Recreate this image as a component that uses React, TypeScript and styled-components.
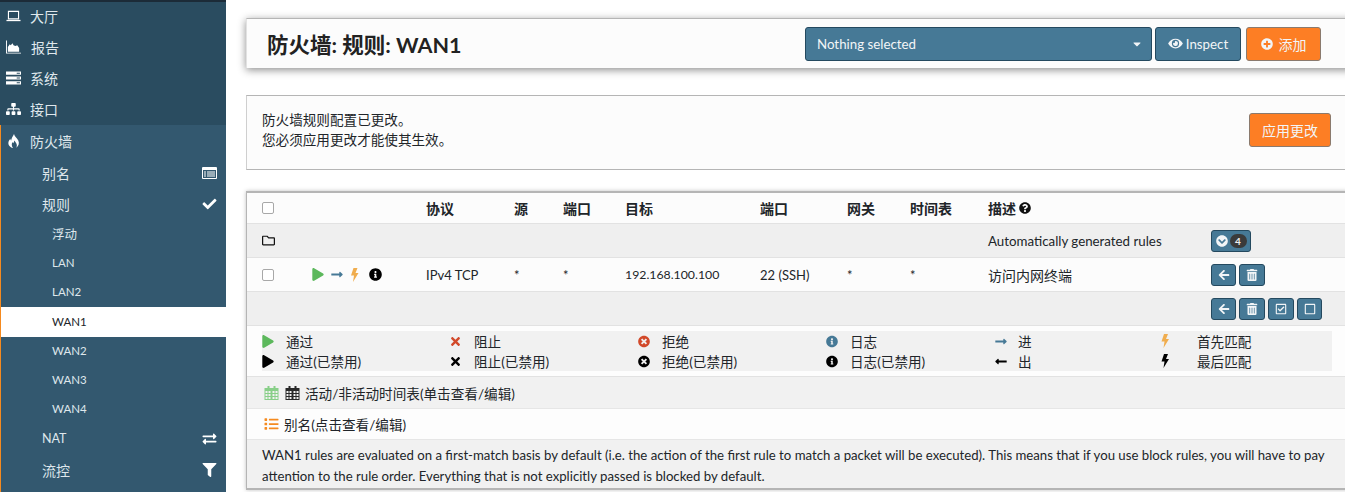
import styled, { createGlobalStyle } from "styled-components";
import type { ReactNode } from "react";
import {
  FaArrowLeft,
  FaCaretDown,
  FaCheck,
  FaChevronCircleDown,
  FaExchangeAlt,
  FaEye,
  FaFilter,
  FaInfoCircle,
  FaList,
  FaLongArrowAltLeft,
  FaLongArrowAltRight,
  FaPlay,
  FaPlusCircle,
  FaQuestionCircle,
  FaRegCheckSquare,
  FaRegFolder,
  FaRegSquare,
  FaSitemap,
  FaTimes,
  FaTimesCircle,
  FaTrashAlt,
} from "react-icons/fa";

const GlobalStyle = createGlobalStyle`
  html, body {
    margin: 0;
    padding: 0;
    height: 100%;
    overflow: hidden;
    background: #fff;
  }
  body {
    font-family: "Lato", "Noto Sans CJK SC", sans-serif;
    font-size: 14px;
    color: #212529;
  }
`;

const Page = styled.div`
  display: flex;
  height: 492px;
  overflow: hidden;
`;

const Sidebar = styled.nav`
  flex: 0 0 226px;
  background: #2a4c60;
  border-top: 2px solid #1c2b38;
  box-sizing: border-box;
  display: flex;
  flex-direction: column;
`;

const TopItems = styled.div`
  display: flex;
  flex-direction: column;
  height: 123px;
`;

const Section = styled.div`
  flex: 1;
  background: #33586f;
  border-left: 1px solid #f58a1f;
  display: flex;
  flex-direction: column;
`;

const NavRow = styled.div<{ $first?: boolean; $gap?: number }>`
  height: 31px;
  display: flex;
  align-items: center;
  padding-left: 6px;
  color: #dfe7ec;
  font-size: 14px;
  margin-top: ${(p) => (p.$first ? "-2px" : "0")};
  svg {
    width: 15px;
    height: 14px;
    color: #fff;
    margin-right: ${(p) => p.$gap ?? 9}px;
    flex: none;
  }
`;

const SectionHead = styled(NavRow)`
  padding: 0 0 2px 5px;
`;

const SubRow = styled.div<{ $latin?: boolean }>`
  height: 31px;
  box-sizing: border-box;
  display: flex;
  align-items: center;
  justify-content: space-between;
  padding: 0 9px 2px 41px;
  color: #dfe7ec;
  font-size: ${(p) => (p.$latin ? "12.5px" : "14px")};
  svg {
    width: 15px;
    height: 14px;
    color: #fff;
  }
`;

const LeafRow = styled.div<{ $active?: boolean; $latin?: boolean }>`
  height: ${(p) => (p.$active ? "30px" : "29px")};
  box-sizing: border-box;
  display: flex;
  align-items: center;
  padding: 0 0 2px 51px;
  font-size: ${(p) => (p.$latin ? "11.5px" : "12.5px")};
  background: ${(p) => (p.$active ? "#fff" : "transparent")};
  color: ${(p) => (p.$active ? "#212529" : "#dfe7ec")};
`;

const Main = styled.main`
  flex: 1;
  min-width: 0;
  padding: 18px 0 0 20px;
  margin-right: -12px;
  display: flex;
  flex-direction: column;
`;

const TitleBar = styled.header`
  height: 50px;
  box-sizing: border-box;
  background: #fcfcfc;
  border-top: 1px solid #b5b5b5;
  border-left: 1px solid #e2e2e2;
  box-shadow: 0 2px 8px rgba(0, 0, 0, 0.45);
  display: flex;
  align-items: center;
  padding: 0 36px 0 20px;
`;

const Title = styled.h1`
  margin: 0 auto 0 0;
  font-size: 21.5px;
  font-weight: 700;
  color: #222;
`;

const Button = styled.div<{ $tone?: "blue" | "orange" }>`
  height: 34px;
  box-sizing: border-box;
  display: flex;
  align-items: center;
  border-radius: 3px;
  font-size: 13.3px;
  color: #f2f5f7;
  background: ${(p) => (p.$tone === "orange" ? "#fd7e24" : "#467996")};
  border: 1px solid ${(p) => (p.$tone === "orange" ? "#8a7a6e" : "#24495f")};
`;

const SelectBox = styled(Button)`
  width: 347px;
  justify-content: space-between;
  padding: 0 8px 0 11px;
  svg {
    width: 12px;
    height: 12px;
  }
`;

const InspectButton = styled(Button)`
  width: 86px;
  margin-left: 3px;
  justify-content: center;
  gap: 3px;
  svg {
    width: 15px;
    height: 13px;
  }
`;

const AddButton = styled(Button)`
  width: 75px;
  margin-left: 5px;
  justify-content: center;
  gap: 6px;
  font-size: 14px;
  svg {
    width: 12px;
    height: 12px;
  }
`;

const Notice = styled.section`
  margin-top: 27px;
  height: 75px;
  box-sizing: border-box;
  background: #fcfcfc;
  border: 1px solid #b5b5b5;
  border-right: 0;
  border-left-color: #cfcfcf;
  display: flex;
  align-items: center;
  justify-content: space-between;
  padding: 0 26px 0 15px;
`;

const NoticeText = styled.div`
  line-height: 20px;
  font-size: 13.6px;
  margin-bottom: 6px;
`;

const ApplyButton = styled(Button)`
  width: 82px;
  justify-content: center;
  font-size: 14px;
  margin-bottom: 6px;
`;

const RulesCard = styled.section`
  margin-top: 21px;
  height: 299px;
  box-sizing: border-box;
  border-top: 2px solid #b5b5b5;
  border-left: 1px solid #b5b5b5;
  border-bottom: 2px solid #b5b5b5;
  box-shadow: 0 0 4px rgba(0, 0, 0, 0.25);
  display: flex;
  flex-direction: column;
  background: #fcfcfc;
`;

const GridRow = styled.div<{ $h: number; $grey?: boolean }>`
  height: ${(p) => p.$h}px;
  flex: none;
  box-sizing: border-box;
  border-bottom: 1px solid #e2e2e2;
  background: ${(p) => (p.$grey ? "#efefef" : "#fcfcfc")};
  display: grid;
  grid-template-columns: 179px 88px 49px 62px 135px 87px 63px 78px 223px 1fr;
  align-items: center;
  font-size: 13px;
`;

const HeadCell = styled.div`
  font-weight: 700;
  font-size: 14px;
  display: flex;
  align-items: center;
  gap: 3px;
  svg {
    width: 12px;
    height: 12px;
    color: #111;
  }
`;

const DigitsCell = styled.div`
  font-size: 12.3px;
`;

const RulesText = styled.div`
  font-size: 13.3px;
`;

const CjkCell = styled.div`
  font-size: 14px;
`;

const FirstCell = styled.div`
  padding-left: 15px;
  display: flex;
  align-items: center;
`;

const Check = styled.span`
  width: 12px;
  height: 12px;
  box-sizing: border-box;
  border: 1px solid #a8a8a8;
  border-radius: 2px;
  background: #fff;
`;

const FolderIcon = styled(FaRegFolder)`
  width: 13px;
  height: 13px;
  color: #111;
`;

const RuleIcons = styled.div`
  display: flex;
  align-items: center;
  margin-left: 38px;
  gap: 6px;
`;

const Tinted = styled.span<{ $color: string; $w?: number; $h?: number; $ml?: number }>`
  display: inline-flex;
  color: ${(p) => p.$color};
  margin-left: ${(p) => p.$ml ?? 0}px;
  svg {
    display: block;
    width: ${(p) => p.$w ?? 13}px;
    height: ${(p) => p.$h ?? 13}px;
  }
`;

const ActionCell = styled.div`
  display: flex;
  gap: 3px;
`;

const IconButton = styled.div<{ $w?: number }>`
  width: ${(p) => p.$w ?? 25}px;
  height: 22px;
  box-sizing: border-box;
  border-radius: 3px;
  background: #467996;
  border: 1px solid #24495f;
  display: flex;
  align-items: center;
  justify-content: center;
  color: #f2f5f7;
  gap: 2px;
  svg {
    width: 12px;
    height: 12px;
  }
`;

const Count = styled.span`
  min-width: 17px;
  height: 14px;
  border-radius: 7px;
  background: #3a3a3a;
  color: #eee;
  font-size: 10px;
  font-weight: 700;
  display: flex;
  align-items: center;
  justify-content: center;
`;

const LegendWrap = styled.div`
  height: 51px;
  flex: none;
  box-sizing: border-box;
  padding: 5px 0 0 15px;
  border-bottom: 1px solid #e2e2e2;
  background: #fdfdfd;
`;

const Legend = styled.div`
  width: 1070px;
  height: 40px;
  background: #f1f1f1;
  display: grid;
  grid-template-columns: 188px 188px 188px 168px 167px 1fr;
  grid-auto-flow: column;
  grid-template-rows: 20px 20px;
  font-size: 13.6px;
`;

const LegendItem = styled.div`
  display: flex;
  align-items: center;
`;

const LegendIcon = styled.span<{ $wide?: boolean }>`
  width: ${(p) => (p.$wide ? 36 : 24)}px;
  flex: none;
  display: flex;
`;

const LinkRow = styled.div<{ $h: number; $grey?: boolean }>`
  height: ${(p) => p.$h}px;
  flex: none;
  box-sizing: border-box;
  border-bottom: 1px solid #e6e6e6;
  background: ${(p) => (p.$grey ? "#f1f1f1" : "#fdfdfd")};
  display: flex;
  align-items: center;
  gap: 5px;
  padding-left: 17px;
  font-size: 13.6px;
`;

const NoteRow = styled.div`
  flex: 1;
  background: #f1f1f1;
  padding: 5px 15px 0;
  font-size: 13.2px;
  line-height: 21px;
  white-space: nowrap;
`;

// fontawesome 4 style bolt, the 5 one is too wide
function Bolt() {
  return (
    <svg viewBox="0 0 8 14" fill="currentColor">
      <path d="M3 0h4L5 5h3L2.5 14 3.5 7.5H.5z" />
    </svg>
  );
}

function LaptopOutline() {
  return (
    <svg viewBox="0 0 16 12" fill="none" stroke="currentColor" strokeWidth="1.2">
      <path d="M2.6 1h10.8v8H2.6z" />
      <path d="M.5 10.8h15" strokeWidth="1.4" />
    </svg>
  );
}

function AreaChart() {
  return (
    <svg viewBox="0 0 16 14" fill="currentColor">
      <path d="M0 0h1v13h15v1H0z" />
      <path d="M2 12V7l2-3 1 1 2-2 1 2 2 1 2-1 2 3v4z" />
    </svg>
  );
}

function ServerBars() {
  return (
    <svg viewBox="0 0 14 12" fill="currentColor">
      <path d="M0 0h14v3H0zM0 4.5h14v3H0zM0 9h14v3H0z" />
      <path d="M10 1h3v1h-3zM10 5.5h3v1h-3zM10 10h3v1h-3z" fill="#2a4c60" />
    </svg>
  );
}

function Flame() {
  return (
    <svg viewBox="0 0 12 14" fill="currentColor">
      <path d="M6.5 0c.5 2.5 3 4 4.300 6.500 1.200 2.500.6 5.500-2.300 7.500 1-1.500 1.200-3.300.2-4.800-.5-.8-1.200-1.400-1.500-2.700-.9 1-.8 2-1.400 2.700-.4-.3-.6-.8-.7-1.300C4 9 3.800 12 5.600 14 2.300 13.300.3 11 1 8c.3-1.500 1.200-2.500 1.800-3.300.1 1 .4 1.500.9 1.900C3.800 4.300 5.400 2.500 6.500 0z" />
    </svg>
  );
}

function AliasCard() {
  return (
    <svg viewBox="0 0 15 12" fill="currentColor">
      <path d="M1 0h13a1 1 0 0 1 1 1v10a1 1 0 0 1-1 1H1a1 1 0 0 1-1-1V1a1 1 0 0 1 1-1z" />
      <path d="M1 3h13v8H1z" fill="#33586f" />
      <path d="M2 4.500h2v1H2zM5 4.500h8v1H5zM2 6.500h2v1H2zM5 6.500h8v1H5zM2 8.500h2v1H2zM5 8.500h8v1H5z" />
    </svg>
  );
}

function CalendarGrid() {
  return (
    <svg viewBox="0 0 14 14" fill="currentColor" fillRule="evenodd">
      <path d="M3 0h2v2h4V0h2v2h3v12H0V2h3z" opacity="0.9" />
      <path
        d="M1 5v2h2V5zM4 5v2h2V5zM8 5v2h2V5zM11 5v2h2V5zM1 8v2h2V8zM4 8v2h2V8zM8 8v2h2V8zM11 8v2h2V8zM1 11v2h2v-2zM4 11v2h2v-2zM8 11v2h2v-2zM11 11v2h2v-2z"
        fill="#f1f1f1"
      />
    </svg>
  );
}

const rowsTop: [ReactNode, string, number?][] = [
  [<LaptopOutline key="l" />, "大厅"],
  [<AreaChart key="c" />, "报告", 10],
  [<ServerBars key="s" />, "系统"],
  [<FaSitemap key="m" />, "接口"],
];

const legend: [ReactNode, string, boolean?][] = [
  [<Tinted $color="#5cb85c" $w={12}><FaPlay /></Tinted>, "通过"],
  [<Tinted $color="#000" $w={12}><FaPlay /></Tinted>, "通过(已禁用)"],
  [<Tinted $color="#d2492a" $w={11}><FaTimes /></Tinted>, "阻止"],
  [<Tinted $color="#000" $w={11}><FaTimes /></Tinted>, "阻止(已禁用)"],
  [<Tinted $color="#d2492a" $w={12}><FaTimesCircle /></Tinted>, "拒绝"],
  [<Tinted $color="#000" $w={12}><FaTimesCircle /></Tinted>, "拒绝(已禁用)"],
  [<Tinted $color="#467996" $w={12}><FaInfoCircle /></Tinted>, "日志"],
  [<Tinted $color="#000" $w={12}><FaInfoCircle /></Tinted>, "日志(已禁用)"],
  [<Tinted $color="#467996" $w={14}><FaLongArrowAltRight /></Tinted>, "进"],
  [<Tinted $color="#000" $w={14}><FaLongArrowAltLeft /></Tinted>, "出"],
  [<Tinted $color="#f0ad4e" $w={8} $h={14}><Bolt /></Tinted>, "首先匹配", true],
  [<Tinted $color="#000" $w={8} $h={14}><Bolt /></Tinted>, "最后匹配", true],
];

export default function App() {
  return (
    <>
      <GlobalStyle />
      <Page>
        <Sidebar>
          <TopItems>
            {rowsTop.map(([icon, label, gap], i) => (
              <NavRow key={label} $first={i === 0} $gap={gap}>
                {icon}
                {label}
              </NavRow>
            ))}
          </TopItems>
          <Section>
            <SectionHead>
              <Flame />
              防火墙
            </SectionHead>
            <SubRow>
              别名
              <AliasCard />
            </SubRow>
            <SubRow>
              规则
              <FaCheck />
            </SubRow>
            <LeafRow>浮动</LeafRow>
            <LeafRow $latin>LAN</LeafRow>
            <LeafRow $latin>LAN2</LeafRow>
            <LeafRow $active $latin>WAN1</LeafRow>
            <LeafRow $latin>WAN2</LeafRow>
            <LeafRow $latin>WAN3</LeafRow>
            <LeafRow $latin>WAN4</LeafRow>
            <SubRow $latin>
              NAT
              <FaExchangeAlt />
            </SubRow>
            <SubRow>
              流控
              <FaFilter />
            </SubRow>
          </Section>
        </Sidebar>
        <Main>
          <TitleBar>
            <Title>防火墙: 规则: WAN1</Title>
            <SelectBox>
              Nothing selected
              <FaCaretDown />
            </SelectBox>
            <InspectButton>
              <FaEye />
              Inspect
            </InspectButton>
            <AddButton $tone="orange">
              <FaPlusCircle />
              添加
            </AddButton>
          </TitleBar>
          <Notice>
            <NoticeText>
              防火墙规则配置已更改。
              <br />
              您必须应用更改才能使其生效。
            </NoticeText>
            <ApplyButton $tone="orange">应用更改</ApplyButton>
          </Notice>
          <RulesCard>
            <GridRow $h={31}>
              <FirstCell>
                <Check />
              </FirstCell>
              <HeadCell>协议</HeadCell>
              <HeadCell>源</HeadCell>
              <HeadCell>端口</HeadCell>
              <HeadCell>目标</HeadCell>
              <HeadCell>端口</HeadCell>
              <HeadCell>网关</HeadCell>
              <HeadCell>时间表</HeadCell>
              <HeadCell>
                描述
                <FaQuestionCircle />
              </HeadCell>
              <div />
            </GridRow>
            <GridRow $h={34} $grey>
              <FirstCell>
                <FolderIcon />
              </FirstCell>
              <div />
              <div />
              <div />
              <div />
              <div />
              <div />
              <div />
              <RulesText>Automatically generated rules</RulesText>
              <ActionCell>
                <IconButton $w={40}>
                  <FaChevronCircleDown />
                  <Count>4</Count>
                </IconButton>
              </ActionCell>
            </GridRow>
            <GridRow $h={34}>
              <FirstCell>
                <Check />
                <RuleIcons>
                  <Tinted $color="#5cb85c" $w={12} $h={13}>
                    <FaPlay />
                  </Tinted>
                  <Tinted $color="#467996" $w={14}>
                    <FaLongArrowAltRight />
                  </Tinted>
                  <Tinted $color="#f0ad4e" $w={9} $h={14}>
                    <Bolt />
                  </Tinted>
                  <Tinted $color="#000" $w={13} $ml={4}>
                    <FaInfoCircle />
                  </Tinted>
                </RuleIcons>
              </FirstCell>
              <div>IPv4 TCP</div>
              <div>*</div>
              <div>*</div>
              <DigitsCell>192.168.100.100</DigitsCell>
              <div>22 (SSH)</div>
              <div>*</div>
              <div>*</div>
              <CjkCell>访问内网终端</CjkCell>
              <ActionCell>
                <IconButton>
                  <FaArrowLeft />
                </IconButton>
                <IconButton $w={26}>
                  <FaTrashAlt />
                </IconButton>
              </ActionCell>
            </GridRow>
            <GridRow $h={34} $grey>
              <div />
              <div />
              <div />
              <div />
              <div />
              <div />
              <div />
              <div />
              <div />
              <ActionCell>
                <IconButton>
                  <FaArrowLeft />
                </IconButton>
                <IconButton $w={26}>
                  <FaTrashAlt />
                </IconButton>
                <IconButton $w={26}>
                  <FaRegCheckSquare />
                </IconButton>
                <IconButton>
                  <FaRegSquare />
                </IconButton>
              </ActionCell>
            </GridRow>
            <LegendWrap>
              <Legend>
                {legend.map(([icon, label, wide]) => (
                  <LegendItem key={label}>
                    <LegendIcon $wide={wide}>{icon}</LegendIcon>
                    {label}
                  </LegendItem>
                ))}
              </Legend>
            </LegendWrap>
            <LinkRow $h={32} $grey>
              <Tinted $color="#7ccb7c" $w={15} $h={14}>
                <CalendarGrid />
              </Tinted>
              <Tinted $color="#111" $w={15} $h={14} $ml={1}>
                <CalendarGrid />
              </Tinted>
              活动/非活动时间表(单击查看/编辑)
            </LinkRow>
            <LinkRow $h={31}>
              <Tinted $color="#f58a1f" $w={15} $h={14}>
                <FaList />
              </Tinted>
              别名(点击查看/编辑)
            </LinkRow>
            <NoteRow>
              WAN1 rules are evaluated on a first-match basis by default (i.e. the action of the first rule to match a
              packet will be executed). This means that if you use block rules, you will have to pay
              <br />
              attention to the rule order. Everything that is not explicitly passed is blocked by default.
            </NoteRow>
          </RulesCard>
        </Main>
      </Page>
    </>
  );
}
